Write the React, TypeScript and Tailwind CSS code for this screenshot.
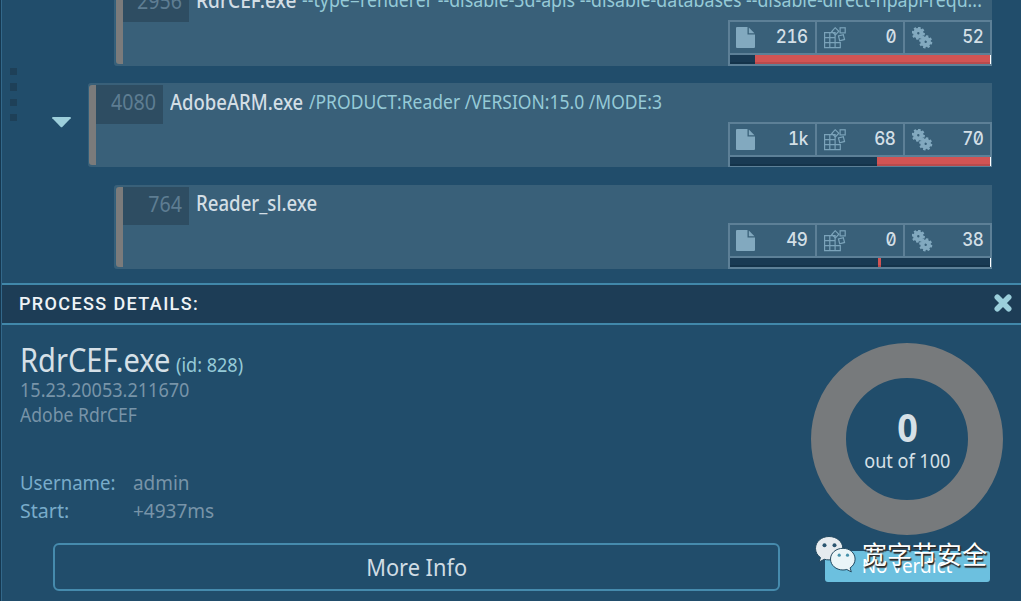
import type { ReactNode } from 'react';

const SANS = "font-['Noto_Sans','Open_Sans',sans-serif]";

/** Single line of condensed text; `box` sets the layout width, `fit` the horizontal scale. */
function Line({ box, fit, children }: { box: string; fit: string; children: ReactNode }) {
  return (
    <span className={`inline-block whitespace-nowrap ${box}`}>
      <span className={`inline-block ${fit}`}>{children}</span>
    </span>
  );
}

function FileIcon() {
  return (
    <svg width="19" height="21" viewBox="0 0 19 21" fill="#82a9bf">
      <path d="M1 0h10.5v7.5H19V20a1 1 0 0 1-1 1H1a1 1 0 0 1-1-1V1a1 1 0 0 1 1-1Z" />
      <path d="M12.8.6 18.5 6.3h-5.7Z" />
    </svg>
  );
}

function ModulesIcon() {
  return (
    <svg width="23" height="22" viewBox="0 0 23 22" fill="none" stroke="#7ba3ba" strokeWidth="1.200">
      <path d="M.6 5.600h10.500v15.100H.6ZM.6 10.600h10.500M.6 15.600h15.700v5.100h-5.200M5.800 5.600v15.100M11.100 15.600v5.100" />
      <rect x="16.100" y=".8" width="5.100" height="5.100" />
      <rect x="8.800" y="1.800" width="5" height="5" transform="rotate(43 11.300 4.300)" />
      <rect x="15" y="8.200" width="5" height="5" transform="rotate(-14 17.500 10.700)" />
    </svg>
  );
}

const TEETH = [0, 45, 90, 135];

function Gear({ x, y, turn }: { x: number; y: number; turn: number }) {
  return (
    <g transform={`translate(${x} ${y}) rotate(${turn})`}>
      <circle r="3.2" fill="none" stroke="#82a9bf" strokeWidth="4" />
      {TEETH.map((a) => (
        <g key={a} transform={`rotate(${a})`} fill="#82a9bf">
          <rect x="-1.3" y="-6.6" width="2.6" height="2.6" rx=".4" />
          <rect x="-1.3" y="4" width="2.6" height="2.6" rx=".4" />
        </g>
      ))}
    </g>
  );
}

function GearsIcon() {
  return (
    <svg width="21" height="22" viewBox="0 0 21 22">
      <Gear x={6.3} y={6.2} turn={10} />
      <Gear x={13.7} y={14.8} turn={14} />
    </svg>
  );
}

function Stat({ icon, value, cls }: { icon: ReactNode; value: string; cls: string }) {
  return (
    <div className={`flex h-[31px] justify-between pt-[5px] ${cls}`}>
      {icon}
      <span className="-mt-[5px] origin-right scale-x-[.95] font-['Inter',sans-serif] text-[18px] font-medium leading-[30px] tracking-[-0.4px] text-[#d3dfe6] [font-feature-settings:'zero','tnum']">
        {value}
      </span>
    </div>
  );
}

type Row = {
  pid: string;
  name: ReactNode;
  args?: ReactNode;
  stats: [string, string, string];
  bar: string;
  place: string;
  edge: string;
  badge: string;
  statBox: string;
  textPad: string;
};

const rows: Row[] = [
  {
    pid: '2956',
    name: <Line box="w-[100px]" fit="origin-left scale-x-[.91]">RdrCEF.exe</Line>,
    args: (
      <Line box="w-[679px]" fit="origin-left scale-x-[.934]">
        --type=renderer --disable-3d-apis --disable-databases --disable-direct-npapi-requ...
      </Line>
    ),
    stats: ['216', '0', '52'],
    bar: 'ml-[25px] w-[235px]',
    place: 'ml-[114px]',
    edge: 'ml-[2px] w-[7px]',
    badge: 'h-[38px] w-[66px]',
    statBox: 'border-b-2',
    textPad: 'pt-px',
  },
  {
    pid: '4080',
    name: <Line box="w-[133px]" fit="origin-left scale-x-[.88]">AdobeARM.exe</Line>,
    args: (
      <Line box="w-[353px]" fit="origin-left scale-x-[.921]">/PRODUCT:Reader /VERSION:15.0 /MODE:3</Line>
    ),
    stats: ['1k', '68', '70'],
    bar: 'ml-[147px] w-[113px]',
    place: 'ml-[88px] mt-[17px]',
    edge: 'ml-px w-[7px]',
    badge: 'h-[39px] w-[67px]',
    statBox: 'border-b',
    textPad: 'pt-[2px]',
  },
  {
    pid: '764',
    name: <Line box="w-[121px]" fit="origin-left scale-x-[.887]">Reader_sl.exe</Line>,
    stats: ['49', '0', '38'],
    bar: 'ml-[148px] w-[3px]',
    place: 'ml-[114px] mt-[18px]',
    edge: 'ml-[2px] w-[7px]',
    badge: 'h-[38px] w-[66px]',
    statBox: 'border-b-2',
    textPad: 'pt-px',
  },
];

function ProcessRow({ row }: { row: Row }) {
  return (
    <div className={`mr-[29px] flex h-[84px] rounded-l-[3px] bg-[#396079] ${row.place}`}>
      <div className={`my-[2px] shrink-0 rounded-l-[3px] bg-[#7b7b7b] shadow-[-1px_0_0_#31607c] ${row.edge}`} />
      <div className={`mt-[2px] shrink-0 bg-[#2e4d62] pr-[7px] text-right text-[21px] leading-[34px] text-[#5e7d92] ${row.badge}`}>
        <span className="inline-block origin-right scale-x-[.935]">{row.pid}</span>
      </div>
      <div className="flex min-w-0 flex-1 flex-col justify-between">
        <div className={`flex h-[37px] gap-[6px] pl-[7px] leading-[34px] ${row.textPad}`}>
          <span className="text-[21px] font-medium text-[#d3dee5]">{row.name}</span>
          {row.args && <span className="text-[19px] text-[#95cad7]">{row.args}</span>}
        </div>
        <div className={`w-[264px] self-end border-x-2 border-t-2 border-[#5d8097] ${row.statBox}`}>
          <div className="flex divide-x-2 divide-[#5d8097] border-b-2 border-[#5d8097]">
            <Stat cls="w-[87px] pl-[6px] pr-[7px]" icon={<FileIcon />} value={row.stats[0]} />
            <Stat cls="w-[88px] pl-[7px] pr-[7px]" icon={<ModulesIcon />} value={row.stats[1]} />
            <Stat cls="w-[85px] flex-1 pl-[7px] pr-[6px]" icon={<GearsIcon />} value={row.stats[2]} />
          </div>
          <div className="-mr-px flex h-[9px] border-r border-white bg-[#193a53] shadow-[inset_0_-2px_0_#14334a]">
            <div className={`h-[9px] bg-[#d15454] shadow-[inset_0_-2px_0_#b94b4d] ${row.bar}`} />
          </div>
        </div>
      </div>
    </div>
  );
}

function ScoreRing() {
  return (
    <div className="flex h-[192px] w-[192px] flex-col items-center rounded-full border-[35px] border-[#777a7c] pt-[29px]">
      <span className="text-[40px] font-bold leading-[40px] text-[#d6e0e7]">
        <span className="inline-block scale-x-[.9]">0</span>
      </span>
      <span className="mt-[4px] whitespace-nowrap text-[19px] leading-[20px] text-[#d6e0e7]">
        <span className="inline-block scale-x-[.949]">out of 100</span>
      </span>
    </div>
  );
}

function Watermark() {
  return (
    <div className="absolute left-[815px] top-[535px] flex">
      <svg width="42" height="38" viewBox="0 0 42 38">
        <g stroke="#21485f" strokeWidth="1">
          <path
            fill="#e6ebef"
            d="M14 1.5C6.300 1.500.5 6.700.5 13.400c0 3.800 1.900 7 5 9.200L4 27l5.300-2.700c1.500.4 3 .6 4.700.6 7.700 0 13.800-5.200 13.800-11.700S21.700 1.500 14 1.500Z"
          />
          <path
            fill="#eaf5f8"
            d="M28 13.300c-7 0-12.500 4.700-12.500 10.800S21 35 28 35c1.300 0 2.600-.2 3.800-.5l4.500 2.400-1.200-4c3-2 5-5.100 5-8.800 0-6.100-5.400-10.800-12.100-10.800Z"
          />
        </g>
        <circle cx="9.500" cy="10.300" r="2" fill="#2b5570" />
        <circle cx="19.500" cy="10.300" r="2" fill="#2b5570" />
        <circle cx="24.200" cy="20.200" r="1.600" fill="#4692ac" />
        <circle cx="32.500" cy="20.200" r="1.600" fill="#4692ac" />
      </svg>
      <span className="ml-[5px] mt-[2px] whitespace-nowrap font-['Noto_Sans_CJK_SC',sans-serif] text-[25px] leading-[32px] text-white [text-shadow:1px_1px_1px_#222,1px_2px_1px_#444]">
        宽字节安全
      </span>
    </div>
  );
}

function Field({ label, value }: { label: ReactNode; value: ReactNode }) {
  return (
    <div className="flex h-[28px] text-[20px] leading-[28px]">
      <span className="w-[113.5px] text-[#79acca]">{label}</span>
      <span className="text-[#7894a8]">{value}</span>
    </div>
  );
}

export default function App() {
  return (
    <div className={`relative flex h-[601px] w-[1021px] overflow-hidden bg-[#214d6b] ${SANS}`}>
      <div className="w-px shrink-0 bg-[#163850]" />
      <div className="w-px shrink-0 bg-[#33688a]" />
      <div className="flex min-w-0 flex-1 flex-col">
        <section className="-ml-[2px] h-[283px] shrink-0 overflow-hidden pl-[2px]">
          <div className="-ml-[2px] -mt-[18px]">
            {rows.map((r) => (
              <ProcessRow key={r.pid} row={r} />
            ))}
          </div>
        </section>

        <header className="flex h-[42px] shrink-0 items-center justify-between border-y-2 border-[#4188aa] bg-[#1d3d56] pl-[17px] pr-[9px]">
          <h2 className="font-['Roboto',sans-serif] text-[18px] font-medium leading-[38px] tracking-[1.38px] text-[#eef3f6]">
            PROCESS DETAILS:
          </h2>
          <svg width="18" height="18" viewBox="0 0 18 18" className="-mt-[2px]">
            <path
              d="M3.300 3.300 14.700 14.700M14.700 3.300 3.300 14.700"
              stroke="#9bcfdb"
              strokeWidth="5.600"
              strokeLinecap="round"
            />
          </svg>
        </header>

        <section className="flex flex-1">
          <div className="flex w-[778px] flex-col pl-[17.500px]">
            <div className="mt-[15px] flex h-[38px] items-baseline gap-[6px] leading-[40px]">
              <h1 className="text-[33px] text-[#d6e0e7]">
                <Line box="w-[150px]" fit="origin-left scale-x-[.88]">RdrCEF.exe</Line>
              </h1>
              <span className="text-[19px] text-[#95cad7]">
                <Line box="w-[67px]" fit="origin-left scale-x-[.95]">(id: 828)</Line>
              </span>
            </div>
            <div className="h-[25px] text-[19px] leading-[25px] text-[#7894a8]">
              <Line box="w-[169px]" fit="origin-left scale-x-[.95]">15.23.20053.211670</Line>
            </div>
            <div className="h-[25px] text-[19px] leading-[25px] text-[#7894a8]">
              <Line box="w-[117px]" fit="origin-left scale-x-[.925]">Adobe RdrCEF</Line>
            </div>
            <div className="mt-[41px]">
              <Field
                label={<Line box="w-[95px]" fit="origin-left scale-x-[.93]">Username:</Line>}
                value={<Line box="w-[56px]" fit="origin-left scale-x-[.945]">admin</Line>}
              />
              <Field
                label={<Line box="w-[50px]" fit="origin-left scale-x-[.98]">Start:</Line>}
                value={<Line box="w-[81px]" fit="origin-left scale-x-[.95]">+4937ms</Line>}
              />
            </div>
            <button className="ml-[33.500px] mt-[18px] h-[48px] w-[727px] rounded-[6px] border-2 border-[#468bad] text-[24px] leading-[44px] text-[#d0dce4]">
              <span className="inline-block scale-x-[.907]">More Info</span>
            </button>
          </div>
          <div className="flex flex-1 flex-col items-center pl-[13px] pt-[18px]">
            <ScoreRing />
            <div className="mt-[16px] flex h-[31px] w-[165px] justify-center rounded-[3px] bg-[#6cc0df] text-[20px] leading-[29px] text-white">
              <span className="scale-x-[.945]">No verdict</span>
            </div>
          </div>
        </section>
      </div>

      <div className="absolute left-[10px] top-[68px] flex flex-col gap-[8px]">
        <i className="h-[7px] w-[7px] bg-[#1e4058]" />
        <i className="h-[8px] w-[7px] bg-[#1e4058]" />
        <i className="h-[7px] w-[7px] bg-[#1e4058]" />
        <i className="h-[7px] w-[7px] bg-[#1e4058]" />
      </div>
      <svg className="absolute left-[52px] top-[117px]" width="19" height="11" viewBox="0 0 19 11">
        <path d="M.3 0h18.400v1.200L10.500 9.800a1.400 1.400 0 0 1-2 0L.3 1.200Z" fill="#9dcfdb" />
      </svg>
      <Watermark />
    </div>
  );
}
